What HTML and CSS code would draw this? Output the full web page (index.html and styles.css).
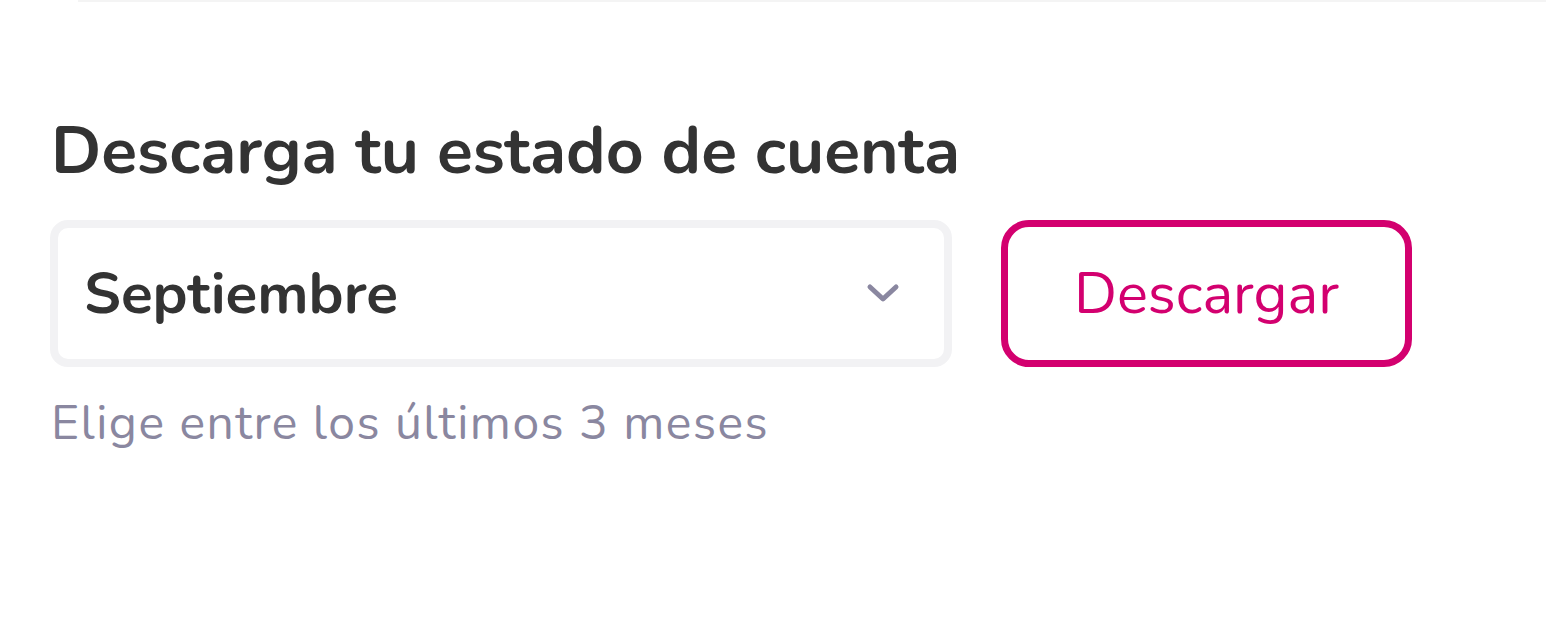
FILE: index.html
```html
<!DOCTYPE html>
<html lang="es">
<head>
<meta charset="utf-8">
<link rel="stylesheet" href="styles.css">
</head>
<body>
<div class="topline"></div>
<main class="section">
  <h1 class="title">Descarga tu estado de cuenta</h1>
  <div class="row">
    <div class="select">
      <span class="select-value">Septiembre</span>
      <svg class="chevron" width="34" height="22" viewBox="0 0 34 22"><path d="M4 4 L17 16 L30 4" fill="none" stroke="#8a87a0" stroke-width="5" stroke-linecap="round" stroke-linejoin="round"/></svg>
    </div>
    <button class="btn">Descargar</button>
  </div>
  <p class="hint">Elige entre los últimos 3 meses</p>
</main>
</body>
</html>
```
FILE: styles.css
```css
html, body {
  margin: 0;
  padding: 0;
  background: #ffffff;
}
body {
  font-family: "Nunito", "Lato", "Noto Sans", sans-serif;
  color: #333333;
}
.topline {
  margin-left: 78px;
  height: 2px;
  background: #f4f4f4;
}
.section {
  padding: 0 50px;
}
.title {
  margin: 109px 0 0 1px;
  font-size: 66px;
  font-weight: 700;
  line-height: 80px;
  color: #333333;
}
.row {
  display: flex;
  gap: 49px;
  margin-top: 29px;
}
.select {
  box-sizing: border-box;
  width: 902px;
  height: 147px;
  border: 8px solid #f2f2f4;
  border-radius: 18px;
  display: flex;
  align-items: center;
  justify-content: space-between;
  padding: 0 44px 0 26px;
}
.select-value {
  font-size: 58.5px;
  font-weight: 700;
  color: #333333;
}
.chevron {
  display: block;
}
.btn {
  box-sizing: border-box;
  width: 411px;
  height: 147px;
  border: 7px solid #d3006f;
  border-radius: 28px;
  background: #ffffff;
  color: #d3006f;
  font-family: inherit;
  font-size: 58px;
  font-weight: 400;
  padding: 0;
}
.hint {
  margin: 26px 0 0 1px;
  font-size: 48px;
  letter-spacing: 1.5px;
  line-height: 60px;
  color: #8a87a0;
}
```
